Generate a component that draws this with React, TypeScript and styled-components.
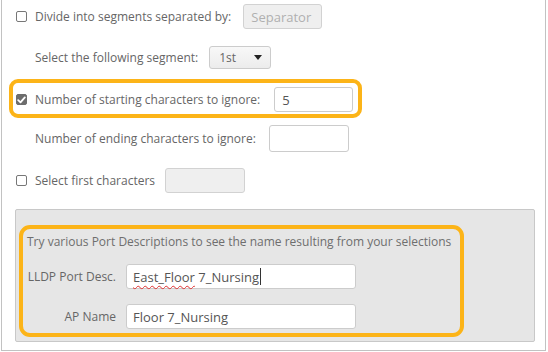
import React from 'react';
import styled, { createGlobalStyle } from 'styled-components';

const GlobalStyle = createGlobalStyle`
  html, body {
    margin: 0;
    padding: 0;
    background: #ffffff;
  }
  body {
    font-family: 'Open Sans', 'Liberation Sans', sans-serif;
    color: #666666;
  }
`;

const ORANGE = '#fcb418';

/* ------------------------------ Outer frame ------------------------------ */
const Frame = styled.div`
  box-sizing: border-box;
  width: 545px;
  height: 351px;
  margin-left: 1px;
  border: 1px solid #c2c2c2;
  border-top: none;
  display: flex;
  flex-direction: column;
`;

const Row = styled.div<{ $top: number; $height: number; $indent?: boolean; $gap?: number }>`
  display: flex;
  align-items: center;
  gap: ${(p) => p.$gap ?? 14}px;
  height: ${(p) => p.$height}px;
  margin-top: ${(p) => p.$top}px;
  padding-left: ${(p) => (p.$indent ? 33 : 14)}px;
  font-size: 12px;
`;

const Highlight = styled.div`
  box-sizing: border-box;
  width: 353px;
  height: 39px;
  margin: 11px 0 0 7px;
  border: 4px solid ${ORANGE};
  border-radius: 9px;
  padding: 2px 0 0 3px;
  display: flex;
  align-items: center;
  gap: 14px;
  font-size: 12px;
`;

const Check = styled.label`
  display: flex;
  align-items: center;
  gap: 8px;
  white-space: nowrap;
`;

const Box = styled.span<{ $checked?: boolean }>`
  box-sizing: border-box;
  width: 11px;
  height: 11px;
  border-radius: 2px;
  border: 1px solid ${(p) => (p.$checked ? '#6d6d6d' : '#777777')};
  background: ${(p) => (p.$checked ? '#6d6d6d' : '#ffffff')};
  display: flex;
  align-items: center;
  justify-content: center;
`;

const Label = styled.span`
  white-space: nowrap;
`;

const TextInput = styled.input<{ $w: number; $h?: number }>`
  box-sizing: border-box;
  width: ${(p) => p.$w}px;
  height: ${(p) => p.$h ?? 26}px;
  border: 1px solid #cccccc;
  border-radius: 3px;
  padding: 0 7px;
  font-family: 'Open Sans', 'Liberation Sans', sans-serif;
  font-size: 13px;
  color: #555555;
  background: #ffffff;
  outline: none;

  &:disabled {
    background: #efefef;
    border-color: #d2d2d2;
  }
  &::placeholder {
    color: #b0b0b0;
  }
`;

const Select = styled.div`
  box-sizing: border-box;
  width: 62px;
  height: 23px;
  border: 1px solid #cccccc;
  border-radius: 3px;
  background: linear-gradient(#f8f8f8, #ececec);
  display: flex;
  align-items: center;
  justify-content: space-between;
  padding: 0 8px 0 9px;
  font-size: 12px;
  color: #666666;
`;

const Caret = styled.span`
  width: 0;
  height: 0;
  border-left: 4px solid transparent;
  border-right: 4px solid transparent;
  border-top: 5px solid #222222;
`;

/* ------------------------------ Test panel ------------------------------- */
const Panel = styled.div`
  box-sizing: border-box;
  width: 520px;
  height: 133px;
  margin: 16px 0 0 13px;
  background: #e6e6e6;
  border: 1px solid #c8c8c8;
  border-radius: 2px;
  padding: 15px 0 0 3px;
`;

const TryBox = styled.div`
  box-sizing: border-box;
  width: 445px;
  height: 112px;
  border: 4px solid ${ORANGE};
  border-radius: 11px;
  padding: 4px 0 0 4px;
  display: flex;
  flex-direction: column;
`;

const Hint = styled.div`
  font-size: 12px;
  line-height: 18px;
  white-space: nowrap;
  color: #6e6e6e;
`;

const FieldRow = styled.div<{ $top: number }>`
  display: flex;
  align-items: center;
  gap: 10px;
  margin-top: ${(p) => p.$top}px;
`;

const FieldLabel = styled.span`
  width: 89px;
  text-align: right;
  font-size: 12px;
  white-space: nowrap;
`;

const Field = styled.div`
  box-sizing: border-box;
  width: 230px;
  height: 25px;
  border: 1px solid #cccccc;
  border-radius: 3px;
  background: #ffffff;
  padding: 0 6px;
  display: flex;
  align-items: center;
  font-size: 13px;
  color: #555555;
  white-space: nowrap;
`;

const Misspelled = styled.span`
  text-decoration: underline wavy #e03030;
  text-decoration-thickness: 1px;
  text-underline-offset: 3px;
`;

const Cursor = styled.span`
  display: inline-block;
  width: 1px;
  height: 17px;
  margin-left: 1px;
  background: #333333;
`;

const Tick = () => (
  <svg width="9" height="8" viewBox="0 0 9 8">
    <path d="M1.2 4.2 L3.5 6.4 L7.8 1.4" fill="none" stroke="#ffffff" strokeWidth="1.8" strokeLinecap="round" strokeLinejoin="round" />
  </svg>
);

export default function App() {
  return (
    <>
      <GlobalStyle />
      <Frame>
        <Row $top={4} $height={25} $gap={12}>
          <Check>
            <Box />
            <Label>Divide into segments separated by:</Label>
          </Check>
          <TextInput $w={79} $h={25} disabled placeholder="Separator" />
        </Row>

        <Row $top={17} $height={22} $indent $gap={11}>
          <Label>Select the following segment:</Label>
          <Select>
            <span>1st</span>
            <Caret />
          </Select>
        </Row>

        <Highlight>
          <Check>
            <Box $checked>
              <Tick />
            </Box>
            <Label>Number of starting characters to ignore:</Label>
          </Check>
          <TextInput $w={79} $h={25} defaultValue="5" />
        </Highlight>

        <Row $top={7} $height={27} $indent $gap={13}>
          <Label>Number of ending characters to ignore:</Label>
          <TextInput $w={80} $h={27} />
        </Row>

        <Row $top={16} $height={25} $gap={10}>
          <Check>
            <Box />
            <Label>Select first characters</Label>
          </Check>
          <TextInput $w={80} $h={25} disabled />
        </Row>

        <Panel>
          <TryBox>
            <Hint>Try various Port Descriptions to see the name resulting from your selections</Hint>
            <FieldRow $top={13}>
              <FieldLabel>LLDP Port Desc.</FieldLabel>
              <Field>
                <Misspelled>East_Floor</Misspelled>&nbsp;7_Nursing
                <Cursor />
              </Field>
            </FieldRow>
            <FieldRow $top={15}>
              <FieldLabel>AP Name</FieldLabel>
              <Field>Floor 7_Nursing</Field>
            </FieldRow>
          </TryBox>
        </Panel>
      </Frame>
    </>
  );
}
